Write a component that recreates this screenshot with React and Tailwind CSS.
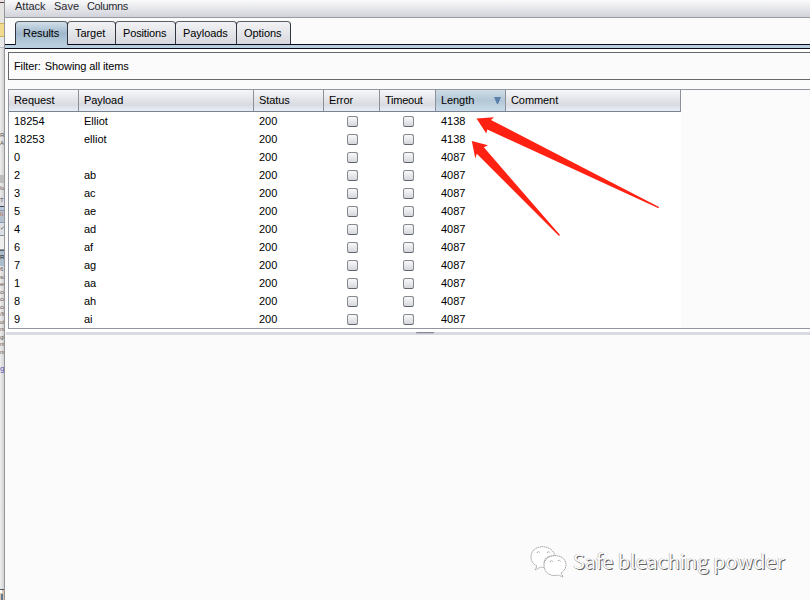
import React from "react";

const tabs = [
  { label: "Results", width: "w-[53px]", active: true },
  { label: "Target", width: "w-[49px]" },
  { label: "Positions", width: "w-[61px]" },
  { label: "Payloads", width: "w-[62px]" },
  { label: "Options", width: "w-[55px]" },
];

const columns = [
  ["Request", "w-[70px]"],
  ["Payload", "w-[175px]"],
  ["Status", "w-[70px]"],
  ["Error", "w-[56px]"],
  ["Timeout", "w-[56px]"],
  ["Length", "w-[70px]"],
  ["Comment", "w-[175px]"],
];

const rows = [
  ["18254", "Elliot", "4138"],
  ["18253", "elliot", "4138"],
  ["0", "", "4087"],
  ["2", "ab", "4087"],
  ["3", "ac", "4087"],
  ["5", "ae", "4087"],
  ["4", "ad", "4087"],
  ["6", "af", "4087"],
  ["7", "ag", "4087"],
  ["1", "aa", "4087"],
  ["8", "ah", "4087"],
  ["9", "ai", "4087"],
];

const sliverLines = ["6", "s/", "er", "cc", "cc", "cc", "/fi", "ol", "nr", "gi", "nf", "nr"];

function BackgroundSliver() {
  return (
    <div className="flex h-full w-[5px] shrink-0 flex-col overflow-hidden border-r border-[#96969a] bg-gradient-to-r from-[#eeeeee] to-[#d2d2d2] text-[6px] leading-[7px] text-[#555]">
      <div className="h-[23px] shrink-0 bg-[#e6e3e3]">
        <div className="h-[3px] w-[4px] border-b border-[#5c3b3b]" />
      </div>
      <div className="h-[14px] shrink-0 border-y border-[#cbb35d] bg-[#f0dc8c]" />
      <div className="h-[11px] shrink-0 border-b border-[#b9bdca] bg-[#e8e8e8]" />
      <div className="h-[84px] shrink-0" />
      <div className="h-[15px] shrink-0"><div>R</div><div className="mt-px">A</div></div>
      <div className="h-[28px] shrink-0" />
      <div className="h-[8px] shrink-0 bg-[#bdbdbd]" />
      <div className="h-[14px] shrink-0 pt-[2px]">lu</div>
      <div className="h-[9px] shrink-0 bg-[#d9dbe1]">T</div>
      <div className="h-[4px] shrink-0 border-t border-[#424956] bg-[#b6cada]" />
      <div className="h-[13px] shrink-0 border-y border-[#8998aa] bg-[#b2c0cf] text-[#c36d50]">It</div>
      <div className="h-[13px] shrink-0 border-b border-[#838c98] bg-[#dce0e4] pt-[2px]">✓</div>
      <div className="h-[14px] shrink-0 border-b border-[#999] bg-[#eeeeee]" />
      <div className="h-[16px] shrink-0 border-t border-[#52606e] bg-[#a9bdcd] pt-[3px] text-[#222]">R</div>
      {sliverLines.map((line, index) => (
        <div key={index} className="h-[7.5px] shrink-0 whitespace-nowrap">{line}</div>
      ))}
      <div className="h-[9px] shrink-0" />
      <div className="h-[9px] shrink-0 text-[8px] text-[#5350b5]">g</div>
      <div className="grow" />
      <div className="h-[11px] shrink-0 border-t border-[#515968] bg-[#d9c4ad]">
        <div className="h-[3px] w-[2px] bg-white" />
        <div className="ml-[1px] mt-[1px] h-[6px] w-[2px] border border-[#607693]" />
      </div>
    </div>
  );
}

function Checkbox() {
  return (
    <span className="h-[11px] w-[11px] rounded-[2.5px] border border-[#858990] border-b-[#5d626c] bg-gradient-to-b from-[#fafafa] to-[#d5d7dc]" />
  );
}

function TableHeader() {
  return (
    <div className="flex h-[22px] w-[672px] border-b border-[#7c8291]">
      {columns.map(([label, width]) => (
        <div
          key={label}
          className={`${width} flex shrink-0 items-center border-r border-[#8b9099] pl-[5px] ${
            label === "Length"
              ? "bg-gradient-to-b from-[#cfdce6] via-[#b3c7d6] to-[#c9dce9]"
              : "bg-gradient-to-b from-[#f7f7f9] via-[#d9dbe1] via-70% to-[#e8eef8]"
          }`}
        >
          <span className={label === "Timeout" ? "-mt-[2px] tracking-[-0.25px]" : "-mt-[2px] tracking-[-0.08px]"}>{label}</span>
          {label === "Length" && (
            <svg className="ml-auto mr-[4px] h-[7px] w-[7px]" viewBox="0 0 7 7">
              <path d="M0 0H7L4 7H3Z" fill="#587fa9" />
            </svg>
          )}
        </div>
      ))}
    </div>
  );
}

function ResultRow({ row }) {
  return (
    <div className="flex h-[18px] w-[672px] items-center bg-white">
      <div className="w-[70px] pl-[5px]">{row[0]}</div>
      <div className="w-[175px] pl-[5px]">{row[1]}</div>
      <div className="w-[70px] pl-[5px]">200</div>
      <div className="flex w-[56px] pl-[23px] pt-px"><Checkbox /></div>
      <div className="flex w-[56px] pl-[23px] pt-px"><Checkbox /></div>
      <div className="w-[70px] pl-[5px]">{row[2]}</div>
      <div className="w-[175px]" />
    </div>
  );
}

function Arrows() {
  return (
    <svg className="pointer-events-none absolute left-0 top-0 h-[600px] w-[810px]" viewBox="0 0 810 600" fill="#ff2213">
      <path d="M476.5 118.5L494 117.2L491 120L659 207L658.5 208.2L487.3 129.5L486.3 133.5Z" />
      <path d="M471.8 141L488 145.3L483.8 147.3L560 235L559 236L476.8 153.8L475.3 158.5Z" />
    </svg>
  );
}

function Watermark() {
  return (
    <div className="absolute left-[530px] top-[545px] flex h-[34px] w-[265px]">
      <svg className="h-[34px] w-[43px] shrink-0" viewBox="0 0 43 34" fill="white" stroke="#777" strokeWidth="0.65" strokeDasharray="1.5 0.5">
        <path d="M25 11C22-2 1-1 1 12C1 16 3 19 7 21L5 25L11 22Q14 23 16 22C11 15 17 10 25 11Z" />
        <path d="M14 20C14 8 36 7 36 20C36 23 34 26 31 28L33 32L28 30C21 32 14 28 14 20Z" />
        <g fill="none">
          <path d="M7 8Q8.5 5 10 8M17 8Q18.5 5 20 8M20 17Q21.5 14 23 17M28 16Q29 14 31 17" />
        </g>
      </svg>
      <span className="-mt-[1.5px] whitespace-nowrap font-['Noto_Sans_CJK_SC','Noto_Sans',sans-serif] text-[19.9px] leading-[34px] text-[#fcfcfc] [text-shadow:1px_1px_0_#626262,-0.5px_-0.5px_0_#aaaaaa]">
        Safe bleaching powder
      </span>
    </div>
  );
}

export default function App() {
  return (
    <main className="relative flex h-[600px] w-[810px] overflow-hidden bg-[#fbfbfb] font-['Liberation_Sans',Arial,sans-serif] text-[11px] leading-[14px] text-black">
      <BackgroundSliver />
      <div className="flex min-w-0 grow flex-col">
        <nav className="flex h-[18px] shrink-0 items-start gap-[8px] border-b border-[#989ba2] bg-gradient-to-b from-[#fafafb] to-[#d1d3da] pl-[10px] text-[#282a30]">
          <span className="-mt-px w-[31px]">Attack</span>
          <span className="-mt-px w-[25px]">Save</span>
          <span className="-mt-px tracking-[-0.35px]">Columns</span>
        </nav>
        <div className="flex h-[26px] shrink-0 items-start pl-[10px] pt-[3px]">
          {tabs.map((tab) => (
            <div
              key={tab.label}
              className={`${tab.width} flex shrink-0 items-start whitespace-nowrap rounded-t-[4px] border border-b-0 border-[#303640] border-t-[#5a5e66] pl-[7px] pt-[4px] ${
                tab.label === "Positions" ? "tracking-[-0.15px]" : "tracking-[-0.06px]"
              } ${
                tab.active
                  ? "relative z-10 h-[24px] bg-gradient-to-b from-[#d2dfe8] via-[#9fb8cc] to-[#b9cfde]"
                  : "-ml-px h-[23px] bg-gradient-to-b from-[#f2f2f4] to-[#d7d9df]"
              }`}
            >
              {tab.label}
            </div>
          ))}
        </div>
        <div className="h-[5px] shrink-0 border-y border-[#080b1c] bg-[#b9cfde]" />
        <div className="h-[3px] shrink-0 bg-white" />
        <div className="ml-[3px] flex h-[28px] shrink-0 items-center gap-[4px] border border-r-0 border-[#66686b] pl-[5px]">
          <span className="tracking-[-0.1px]">Filter:</span>
          <span className="tracking-[-0.1px]">Showing all items</span>
        </div>
        <div className="h-[9px] shrink-0" />
        <section className="ml-[3px] h-[240px] shrink-0 border border-r-0 border-[#9296a3]">
          <TableHeader />
          {rows.map((row) => <ResultRow key={row[0]} row={row} />)}
        </section>
        <div className="h-[3px] shrink-0 bg-white" />
        <div className="ml-px flex h-[3px] shrink-0 bg-[#d8dae0] pl-[410px]">
          <div className="h-[2px] w-[18px] rounded-t-[1px] border-t border-[#858a96] bg-[#bfc3cb]" />
        </div>
      </div>
      <Arrows />
      <Watermark />
    </main>
  );
}
